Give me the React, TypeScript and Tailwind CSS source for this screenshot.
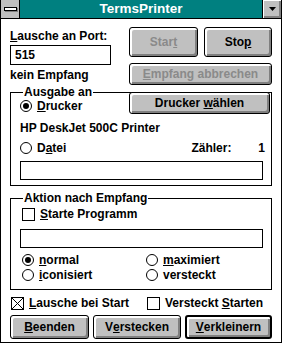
import React from 'react';

type BtnProps = { children: React.ReactNode; className?: string; disabled?: boolean; def?: boolean };

function Btn({ children, className = '', disabled, def }: BtnProps) {
  return (
    <div
      className={`flex items-center justify-center bg-[#c0c0c0] rounded-[3px] border-black ${
        def ? 'border-2' : 'border'
      } shadow-[inset_2px_2px_0_#fff,inset_-2px_-2px_0_#808080] ${disabled ? 'text-[#8a8a8a]' : 'text-black'} ${className}`}
    >
      {children}
    </div>
  );
}

function Radio({ checked }: { checked?: boolean }) {
  return (
    <span className="w-[12px] h-[12px] rounded-full border border-black bg-white flex items-center justify-center shrink-0">
      {checked && <span className="w-[6px] h-[6px] rounded-full bg-black" />}
    </span>
  );
}

function Check({ checked }: { checked?: boolean }) {
  return (
    <span className="w-[13px] h-[13px] border border-black bg-white shrink-0 flex">
      {checked && (
        <svg width="11" height="11" viewBox="0 0 11 11">
          <path d="M0 0L11 11M11 0L0 11" stroke="black" strokeWidth="1" />
        </svg>
      )}
    </span>
  );
}

function Field({ value, className = '' }: { value?: string; className?: string }) {
  return <div className={`border border-black bg-white flex items-center pl-[4px] ${className}`}>{value}</div>;
}

export default function App() {
  return (
    <div className="w-[282px] h-[343px] bg-white border-x border-b border-black flex flex-col font-['Liberation_Sans',Arial,sans-serif] text-[12px] font-bold leading-[14px] text-black overflow-hidden">
      {/* title bar */}
      <div className="h-[19px] flex border-b border-black shrink-0">
        <div className="w-[19px] bg-[#c0c0c0] border-r border-black flex items-center justify-center">
          <div className="w-[13px] h-[4px] bg-white border border-black shadow-[1px_1px_0_#808080]" />
        </div>
        <div className="flex-1 bg-[#008080] text-white text-[13.5px] flex items-center justify-center">TermsPrinter</div>
        <div className="w-[19px] bg-[#c0c0c0] border-l border-black flex items-center justify-center shadow-[inset_1px_1px_0_#fff,inset_-2px_-2px_0_#808080]">
          <svg width="7" height="4" viewBox="0 0 7 4">
            <path d="M0 0H7L3.5 4Z" fill="black" />
          </svg>
        </div>
      </div>

      <div className="flex-1 flex flex-col px-[9px]">
        {/* port + start/stop */}
        <div className="flex">
          <div className="w-[101px] flex flex-col">
            <div className="mt-[10px]">
              <u>L</u>ausche an Port:
            </div>
            <Field value="515" className="h-[20px] mt-[2px]" />
            <div className="mt-[3px]">kein Empfang</div>
          </div>
          <div className="ml-auto w-[143px] flex flex-col">
            <div className="flex gap-[6px] mt-[8px]">
              <Btn disabled className="w-[69px] h-[30px]">
                Star<u>t</u>
              </Btn>
              <Btn className="w-[68px] h-[30px]">
                Sto<u>p</u>
              </Btn>
            </div>
            <Btn disabled className="h-[22px] mt-[6px]">
              <u>E</u>mpfang abbrechen
            </Btn>
          </div>
        </div>

        {/* Ausgabe an */}
        <fieldset className="border border-black pl-[9px] pr-[8px] pb-[5px]">
          <legend className="ml-[3px] px-[1px]">Ausgabe an</legend>
          <div className="flex items-center mt-[-7px]">
            <div className="flex items-center gap-[5px] mt-[5px]">
              <Radio checked />
              <span>
                <u>D</u>rucker
              </span>
            </div>
            <Btn className="ml-auto mr-[-7px] w-[141px] h-[22px]">
              Drucker&nbsp;<u>w</u>ählen
            </Btn>
          </div>
          <div className="mt-[7px]">HP DeskJet 500C Printer</div>
          <div className="flex items-center mt-[6px]">
            <div className="flex items-center gap-[5px]">
              <Radio />
              <span>
                D<u>a</u>tei
              </span>
            </div>
            <span className="ml-[125px]">Zähler:</span>
            <span className="ml-auto mr-[-2px]">1</span>
          </div>
          <Field className="h-[19px] mt-[6px]" />
        </fieldset>

        {/* Aktion nach Empfang */}
        <fieldset className="border border-black pl-[9px] pr-[8px] pb-[7px] mt-[5px]">
          <legend className="ml-[3px] px-[1px]">Aktion nach Empfang</legend>
          <div className="flex items-center gap-[5px] ml-[2px] mt-[2px]">
            <Check />
            <span>
              <u>S</u>tarte Programm
            </span>
          </div>
          <Field className="h-[19px] mt-[8px]" />
          <div className="grid grid-cols-[124px_1fr] mt-[5px] gap-y-[1px]">
            <div className="flex items-center gap-[5px] ml-[2px]">
              <Radio checked />
              <span>
                <u>n</u>ormal
              </span>
            </div>
            <div className="flex items-center gap-[5px] ml-[2px]">
              <Radio />
              <span>
                <u>m</u>aximiert
              </span>
            </div>
            <div className="flex items-center gap-[5px] ml-[2px]">
              <Radio />
              <span>
                <u>i</u>conisiert
              </span>
            </div>
            <div className="flex items-center gap-[5px] ml-[2px]">
              <Radio />
              <span>versteckt</span>
            </div>
          </div>
        </fieldset>

        {/* start options */}
        <div className="grid grid-cols-[136px_1fr] mt-[6px]">
          <div className="flex items-center gap-[5px] ml-[1px]">
            <Check checked />
            <span>
              <u>L</u>ausche bei Start
            </span>
          </div>
          <div className="flex items-center gap-[5px] ml-[1px]">
            <Check />
            <span>
              Versteckt <u>S</u>tarten
            </span>
          </div>
        </div>

        {/* bottom buttons */}
        <div className="flex justify-between mt-[5px]">
          <Btn className="w-[79px] h-[24px]">
            <u>B</u>eenden
          </Btn>
          <Btn className="w-[88px] h-[24px]">
            V<u>e</u>rstecken
          </Btn>
          <Btn def className="w-[87px] h-[24px]">
            <u>V</u>erkleinern
          </Btn>
        </div>
      </div>
    </div>
  );
}
